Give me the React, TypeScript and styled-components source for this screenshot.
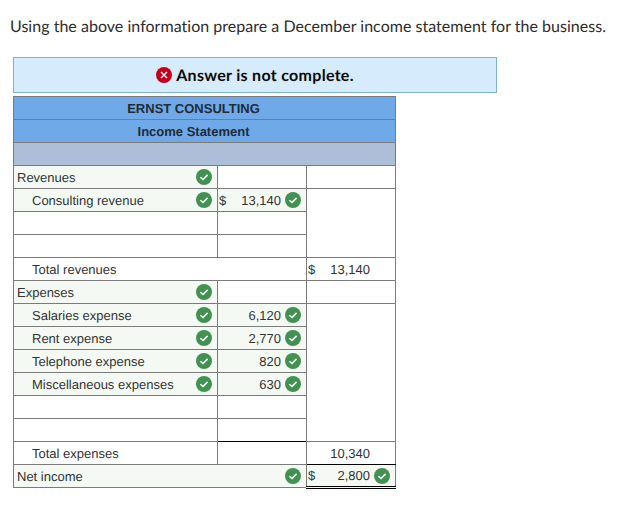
import React from "react";
import styled, { createGlobalStyle } from "styled-components";

const Global = createGlobalStyle`
  html, body { margin: 0; padding: 0; background: #fff; }
  body { font-family: "Liberation Sans", Arial, sans-serif; text-rendering: geometricPrecision; }
`;

const Page = styled.div`
  width: 635px;
  height: 519px;
  overflow: hidden;
  padding: 16px 0 0 13px;
  box-sizing: border-box;
`;

const Prompt = styled.p`
  margin: 0 0 19px -3px;
  font-family: Lato, sans-serif;
  font-size: 16px;
  letter-spacing: 0.025px;
  line-height: 22px;
  color: #2d2d2d;
  white-space: nowrap;
`;

const Banner = styled.div`
  box-sizing: border-box;
  width: 484px;
  height: 36px;
  background: #d6ebfb;
  border: 1px solid #7fb1de;
  display: flex;
  align-items: center;
  justify-content: center;
  gap: 4px;
  margin-bottom: 3px;
  font-family: Lato, sans-serif;
  font-weight: 700;
  font-size: 16px;
  letter-spacing: 0.3px;
  color: #0a0a0a;
`;

const Sheet = styled.table`
  border-collapse: collapse;
  table-layout: fixed;
  width: 383px;
  font-size: 13px;
  color: #333;
`;

const Cell = styled.td<{ $tint?: boolean; $heavyBottom?: boolean; $netTotal?: boolean; $indent?: boolean }>`
  box-sizing: border-box;
  height: 23px;
  padding: 0 5px 0 ${(p) => (p.$indent ? "18px" : "3px")};
  border: 1px solid #7b7b7b;
  vertical-align: middle;
  white-space: nowrap;
  background: ${(p) => (p.$tint ? "#f4faf3" : "#fff")};
  ${(p) => p.$heavyBottom && "border-bottom: 1px solid #000;"}
  ${(p) => p.$netTotal && "border-bottom: 3px double #000;"}
`;

const TitleCell = styled.td`
  height: 23px;
  padding: 0;
  box-sizing: border-box;
  border: 1px solid #7b7b7b;
  background: #6fa9e8;
  text-align: center;
  font-weight: 700;
  color: #222b36;
  padding-right: 22px;
`;

const BandCell = styled.td`
  height: 23px;
  padding: 0;
  box-sizing: border-box;
  border: 1px solid #7b7b7b;
  background: #adbed9;
`;

const Line = styled.div<{ $compact?: boolean }>`
  display: flex;
  align-items: center;
  height: ${(p) => (p.$compact ? "20px" : "22px")};
`;

const Label = styled.span`
  flex: 1;
`;

const Amount = styled.span`
  flex: 1;
  text-align: right;
  padding-right: 4px;
`;

const Dollar = styled.span`
  margin-left: -2px;
`;

const IconSlot = styled.span`
  flex: none;
  width: 16px;
  height: 16px;
  display: block;
`;

const Ok = () => (
  <IconSlot>
    <svg width="16" height="16" viewBox="0 0 16 16">
      <circle cx="8" cy="8" r="8" fill="#429153" />
      <path d="M4.4 8.2 L7 10.5 L11.6 5.9" fill="none" stroke="#fff" strokeWidth="1.5" />
    </svg>
  </IconSlot>
);

const Bad = () => (
  <IconSlot>
    <svg width="16" height="16" viewBox="0 0 16 16">
      <circle cx="8" cy="8" r="8" fill="#c5001c" />
      <path d="M5 5 L11 11 M11 5 L5 11" fill="none" stroke="#fff" strokeWidth="1.4" />
    </svg>
  </IconSlot>
);

type RowLabelProps = { text: string; ok?: boolean };
const RowLabel = ({ text, ok }: RowLabelProps) => (
  <Line>
    <Label>{text}</Label>
    {ok && <Ok />}
  </Line>
);

type MoneyProps = { sign?: boolean; value: string; ok?: boolean; compact?: boolean };
const Money = ({ sign, value, ok, compact }: MoneyProps) => (
  <Line $compact={compact}>
    {sign && <Dollar>$</Dollar>}
    <Amount>{value}</Amount>
    {ok ? <Ok /> : <IconSlot />}
  </Line>
);

const EmptyRow = ({ heavy }: { heavy?: boolean }) => (
  <tr>
    <Cell />
    <Cell $heavyBottom={heavy} />
  </tr>
);

export default function App() {
  return (
    <Page>
      <Global />
      <Prompt>Using the above information prepare a December income statement for the business.</Prompt>
      <Banner>
        <Bad />
        Answer is not complete.
      </Banner>
      <Sheet>
        <colgroup>
          <col width="204" />
          <col width="89" />
          <col width="89" />
        </colgroup>
        <tbody>
          <tr><TitleCell colSpan={3}>ERNST CONSULTING</TitleCell></tr>
          <tr><TitleCell colSpan={3}>Income Statement</TitleCell></tr>
          <tr><BandCell colSpan={3} /></tr>
          <tr>
            <Cell $tint><RowLabel text="Revenues" ok /></Cell>
            <Cell />
            <Cell />
          </tr>
          <tr>
            <Cell $tint $indent><RowLabel text="Consulting revenue" ok /></Cell>
            <Cell $tint><Money sign value="13,140" ok /></Cell>
            <Cell rowSpan={3} />
          </tr>
          <EmptyRow />
          <EmptyRow />
          <tr>
            <Cell $indent colSpan={2}><RowLabel text="Total revenues" /></Cell>
            <Cell><Money sign value="13,140" /></Cell>
          </tr>
          <tr>
            <Cell $tint><RowLabel text="Expenses" ok /></Cell>
            <Cell />
            <Cell />
          </tr>
          <tr>
            <Cell $tint $indent><RowLabel text="Salaries expense" ok /></Cell>
            <Cell $tint><Money value="6,120" ok /></Cell>
            <Cell rowSpan={6} />
          </tr>
          <tr>
            <Cell $tint $indent><RowLabel text="Rent expense" ok /></Cell>
            <Cell $tint><Money value="2,770" ok /></Cell>
          </tr>
          <tr>
            <Cell $tint $indent><RowLabel text="Telephone expense" ok /></Cell>
            <Cell $tint><Money value="820" ok /></Cell>
          </tr>
          <tr>
            <Cell $tint $indent><RowLabel text="Miscellaneous expenses" ok /></Cell>
            <Cell $tint><Money value="630" ok /></Cell>
          </tr>
          <EmptyRow />
          <EmptyRow heavy />
          <tr>
            <Cell $indent><RowLabel text="Total expenses" /></Cell>
            <Cell />
            <Cell $heavyBottom><Money value="10,340" /></Cell>
          </tr>
          <tr>
            <Cell $tint colSpan={2}>
              <Line $compact><Label>Net income</Label><Ok /></Line>
            </Cell>
            <Cell $tint $netTotal><Money sign value="2,800" ok compact /></Cell>
          </tr>
        </tbody>
      </Sheet>
    </Page>
  );
}
